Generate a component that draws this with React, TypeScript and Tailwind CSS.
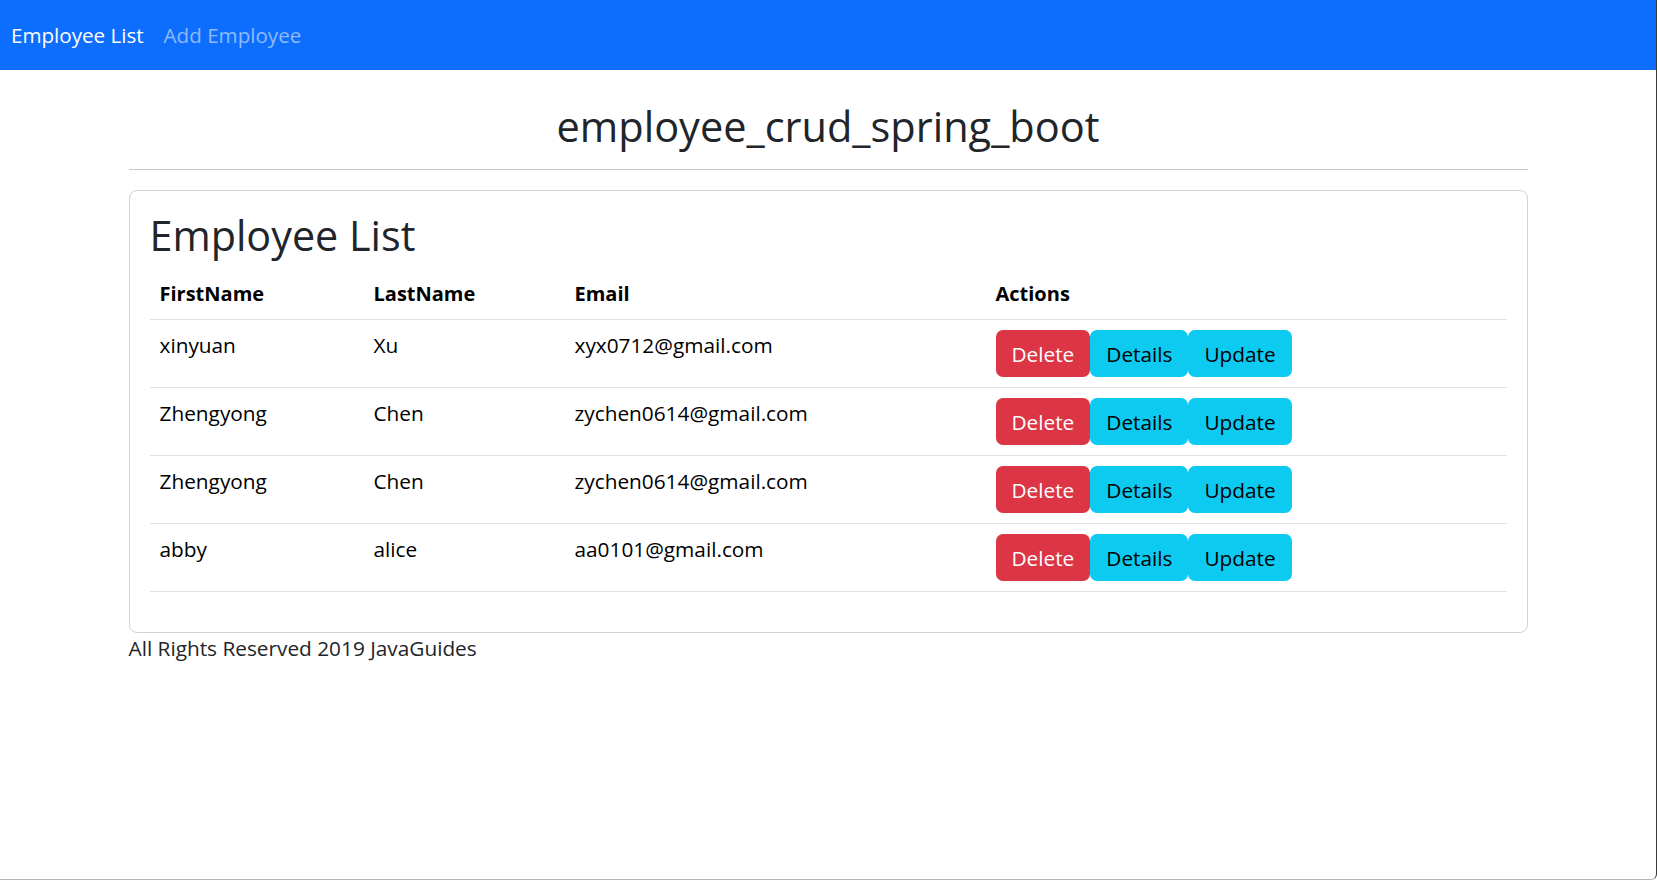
type Employee = {
  firstName: string;
  lastName: string;
  email: string;
};

const employees: Employee[] = [
  { firstName: 'xinyuan', lastName: 'Xu', email: 'xyx0712@gmail.com' },
  { firstName: 'Zhengyong', lastName: 'Chen', email: 'zychen0614@gmail.com' },
  { firstName: 'Zhengyong', lastName: 'Chen', email: 'zychen0614@gmail.com' },
  { firstName: 'abby', lastName: 'alice', email: 'aa0101@gmail.com' },
];

export default function App() {
  return (
    <div
      className="h-[880px] bg-white text-[20.8px] leading-[30px] text-[#212529] border-r border-r-[#3a3a3a] border-b border-b-[#b4b4b4] rounded-br-[6px] overflow-hidden"
      style={{ fontFamily: '"Open Sans", "Noto Sans", sans-serif' }}
    >
      {/* Navbar */}
      <nav className="h-[70px] bg-[#0d6efd] flex items-center pl-[11px] gap-[20px] text-[20.6px]">
        <a className="text-white">Employee List</a>
        <a className="text-[#8fbafe]">Add Employee</a>
      </nav>

      <div className="w-[1399px] mx-auto">
        {/* Page title */}
        <h2 className="mt-[32px] text-[41.5px] leading-[48px] text-center font-normal">
          employee_crud_spring_boot
        </h2>
        <hr className="mt-[19px] mb-[20px] border-t border-[#c8c8c8]" />

        {/* Card */}
        <div className="border border-[#d3d3d3] rounded-[8px] p-[20px]">
          <h2 className="text-[41.3px] leading-[48px] mb-[10px] font-normal">Employee List</h2>
          <table className="w-full mb-[20px] text-black">
            <thead>
              <tr className="border-b border-[#dee2e6] text-[20px]">
                <th className="text-left font-bold px-[10px] py-[10px] w-[214px]">FirstName</th>
                <th className="text-left font-bold px-[10px] py-[10px] w-[201px]">LastName</th>
                <th className="text-left font-bold px-[10px] py-[10px] w-[421px]">Email</th>
                <th className="text-left font-bold px-[10px] py-[10px]">Actions</th>
              </tr>
            </thead>
            <tbody>
              {employees.map((e, i) => (
                <tr key={i} className="border-b border-[#dee2e6] align-top">
                  <td className="px-[10px] py-[10px]">{e.firstName}</td>
                  <td className="px-[10px] py-[10px]">{e.lastName}</td>
                  <td className="px-[10px] py-[10px]">{e.email}</td>
                  <td className="px-[10px] py-[10px]">
                    <div className="flex">
                      <button className="h-[47px] px-[16px] rounded-[7px] bg-[#dc3545] text-white">Delete</button>
                      <button className="h-[47px] px-[16px] rounded-[7px] bg-[#0dcaf0] text-black">Details</button>
                      <button className="h-[47px] px-[16px] rounded-[7px] bg-[#0dcaf0] text-black">Update</button>
                    </div>
                  </td>
                </tr>
              ))}
            </tbody>
          </table>
        </div>

        <footer className="leading-[30px]">All Rights Reserved 2019 JavaGuides</footer>
      </div>
    </div>
  );
}
